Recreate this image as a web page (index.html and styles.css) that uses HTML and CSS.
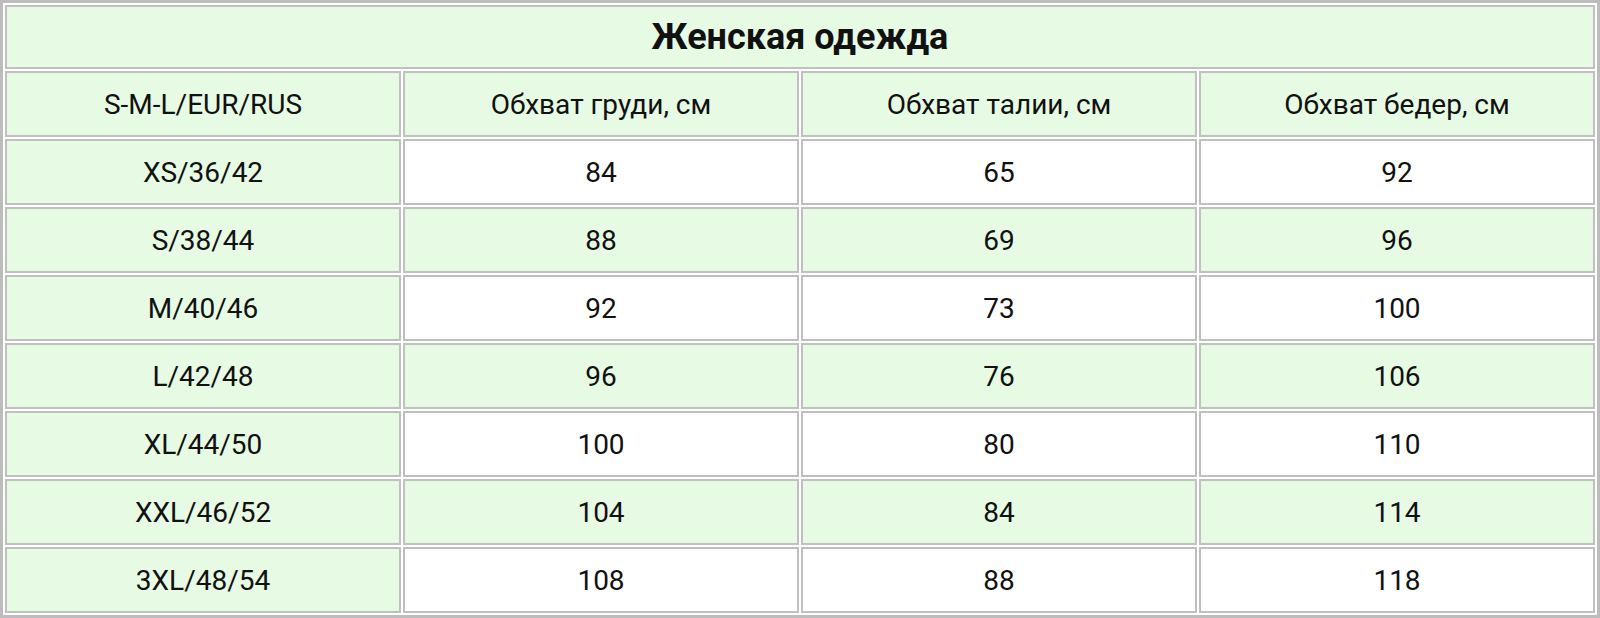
FILE: index.html
```html
<!DOCTYPE html>
<html lang="ru">
<head>
<meta charset="utf-8">
<title>Женская одежда</title>
<link rel="stylesheet" href="styles.css">
</head>
<body>
<table class="size-table">
  <thead>
    <tr><th class="title" colspan="4">Женская одежда</th></tr>
    <tr class="head">
      <td>S-M-L/EUR/RUS</td>
      <td>Обхват груди, см</td>
      <td>Обхват талии, см</td>
      <td>Обхват бедер, см</td>
    </tr>
  </thead>
  <tbody>
    <tr class="odd"><td>XS/36/42</td><td>84</td><td>65</td><td>92</td></tr>
    <tr class="even"><td>S/38/44</td><td>88</td><td>69</td><td>96</td></tr>
    <tr class="odd"><td>M/40/46</td><td>92</td><td>73</td><td>100</td></tr>
    <tr class="even"><td>L/42/48</td><td>96</td><td>76</td><td>106</td></tr>
    <tr class="odd"><td>XL/44/50</td><td>100</td><td>80</td><td>110</td></tr>
    <tr class="even"><td>XXL/46/52</td><td>104</td><td>84</td><td>114</td></tr>
    <tr class="odd"><td>3XL/48/54</td><td>108</td><td>88</td><td>118</td></tr>
  </tbody>
</table>
</body>
</html>
```

FILE: styles.css
```css
html, body {
  margin: 0;
  padding: 0;
  background: #ffffff;
}

body {
  font-family: Roboto, "Liberation Sans", Arial, sans-serif;
  color: #111111;
}

.size-table {
  width: 1600px;
  height: 618px;
  table-layout: fixed;
  border-collapse: separate;
  border-spacing: 2px;
  border: 3px solid #bdbdbd;
  box-sizing: border-box;
}

.size-table th,
.size-table td {
  border: 2px solid #c0c0c0;
  text-align: center;
  vertical-align: middle;
  padding: 0;
  background: #e6fae4;
}

.size-table .title {
  height: 60px;
  font-size: 36px;
  font-weight: 700;
}

.size-table .head td,
.size-table tbody td {
  height: 62px;
  font-size: 28px;
  font-weight: 400;
}

.size-table tbody tr.odd td {
  background: #ffffff;
}

.size-table tbody tr td:first-child {
  background: #e6fae4;
}
```
